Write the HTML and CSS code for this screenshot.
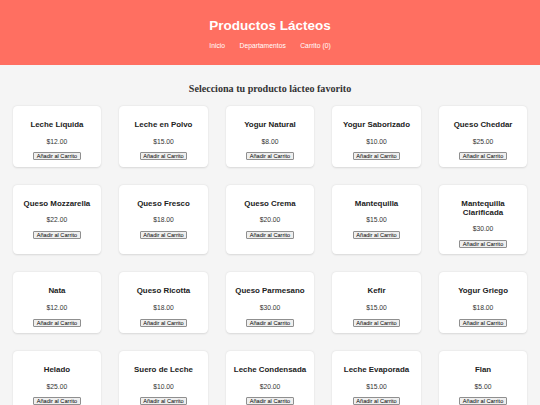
FILE: index.html
```html
<!DOCTYPE html>
<html lang="es">

<head>
    <title>Productos Lácteos</title>
    <meta charset="UTF-8">
    <meta name="viewport" content="width=device-width, initial-scale=1">
    <link rel="stylesheet" href="styles.css">
</head>

<body>
    <header class="header">
        <h1>Productos Lácteos</h1>
        <nav>
            <ul class="menu">
                <li><a href="#">Inicio</a></li>
                <li><a href="#">Departamentos</a></li>
                <li><a href="#">Carrito (0)</a></li>
            </ul>
        </nav>
    </header>
    <main class="content">
        <h2>Selecciona tu producto lácteo favorito</h2>
        <div class="products">
            <div class="product">
                <h3>Leche Líquida</h3>
                <p>$12.00</p>
                <button type="button">Añadir al Carrito</button>
            </div>
            <div class="product">
                <h3>Leche en Polvo</h3>
                <p>$15.00</p>
                <button type="button">Añadir al Carrito</button>
            </div>
            <div class="product">
                <h3>Yogur Natural</h3>
                <p>$8.00</p>
                <button type="button">Añadir al Carrito</button>
            </div>
            <div class="product">
                <h3>Yogur Saborizado</h3>
                <p>$10.00</p>
                <button type="button">Añadir al Carrito</button>
            </div>
            <div class="product">
                <h3>Queso Cheddar</h3>
                <p>$25.00</p>
                <button type="button">Añadir al Carrito</button>
            </div>
            <div class="product">
                <h3>Queso Mozzarella</h3>
                <p>$22.00</p>
                <button type="button">Añadir al Carrito</button>
            </div>
            <div class="product">
                <h3>Queso Fresco</h3>
                <p>$18.00</p>
                <button type="button">Añadir al Carrito</button>
            </div>
            <div class="product">
                <h3>Queso Crema</h3>
                <p>$20.00</p>
                <button type="button">Añadir al Carrito</button>
            </div>
            <div class="product">
                <h3>Mantequilla</h3>
                <p>$15.00</p>
                <button type="button">Añadir al Carrito</button>
            </div>
            <div class="product">
                <h3>Mantequilla Clarificada</h3>
                <p>$30.00</p>
                <button type="button">Añadir al Carrito</button>
            </div>
            <div class="product">
                <h3>Nata</h3>
                <p>$12.00</p>
                <button type="button">Añadir al Carrito</button>
            </div>
            <div class="product">
                <h3>Queso Ricotta</h3>
                <p>$18.00</p>
                <button type="button">Añadir al Carrito</button>
            </div>
            <div class="product">
                <h3>Queso Parmesano</h3>
                <p>$30.00</p>
                <button type="button">Añadir al Carrito</button>
            </div>
            <div class="product">
                <h3>Kefir</h3>
                <p>$15.00</p>
                <button type="button">Añadir al Carrito</button>
            </div>
            <div class="product">
                <h3>Yogur Griego</h3>
                <p>$18.00</p>
                <button type="button">Añadir al Carrito</button>
            </div>
            <div class="product">
                <h3>Helado</h3>
                <p>$25.00</p>
                <button type="button">Añadir al Carrito</button>
            </div>
            <div class="product">
                <h3>Suero de Leche</h3>
                <p>$10.00</p>
                <button type="button">Añadir al Carrito</button>
            </div>
            <div class="product">
                <h3>Leche Condensada</h3>
                <p>$20.00</p>
                <button type="button">Añadir al Carrito</button>
            </div>
            <div class="product">
                <h3>Leche Evaporada</h3>
                <p>$15.00</p>
                <button type="button">Añadir al Carrito</button>
            </div>
            <div class="product">
                <h3>Flan</h3>
                <p>$5.00</p>
                <button type="button">Añadir al Carrito</button>
            </div>
        </div>
    </main>
</body>

</html>
```

FILE: styles.css
```css
body {
    margin: 0;
    background: #f5f5f5;
}

.header {
    padding: 9px 0;
    background: #ff6f61;
    color: #fff;
    text-align: center;
    font-family: "Liberation Sans", Arial, sans-serif;
}

.header h1 {
    margin: 9.25px 0 8px;
    font-size: 13.5px;
    line-height: 15.5px;
}

.menu {
    margin: 0 0 6.2px;
    padding: 0;
    list-style: none;
    font-size: 6.75px;
    line-height: 8px;
}

.menu li {
    display: inline;
    margin: 0 6.3px;
}

.menu a {
    color: #fff;
    text-decoration: none;
}

.content {
    padding: 8.4px 12.7px;
}

.content h2 {
    margin: 9.9px 0 10.7px;
    font-family: "Liberation Serif", "Times New Roman", serif;
    font-size: 10.1px;
    line-height: 12px;
    color: #333;
    text-align: center;
}

.products {
    display: grid;
    grid-template-columns: repeat(5, 1fr);
    gap: 18px;
}

.product {
    padding: 6.3px 6.3px 6.4px;
    background: #fff;
    border-radius: 4.2px;
    box-shadow: 0 0.8px 2.1px rgba(0, 0, 0, 0.12);
    text-align: center;
    font-family: "Liberation Sans", Arial, sans-serif;
}

.product h3 {
    margin: 7.8px 0 8.5px;
    font-size: 7.9px;
    line-height: 9px;
    color: #222;
}

.product p {
    margin: 0 0 6.7px;
    font-size: 6.75px;
    line-height: 8px;
    color: #333;
}

.product button {
    display: block;
    margin: 0 auto;
    padding: 0 2.5px;
    border: 1px solid #8f8f8f;
    border-radius: 1px;
    background: #efefef;
    color: #000;
    font-family: "Liberation Sans", Arial, sans-serif;
    font-size: 5.6px;
    line-height: 6px;
}
```
